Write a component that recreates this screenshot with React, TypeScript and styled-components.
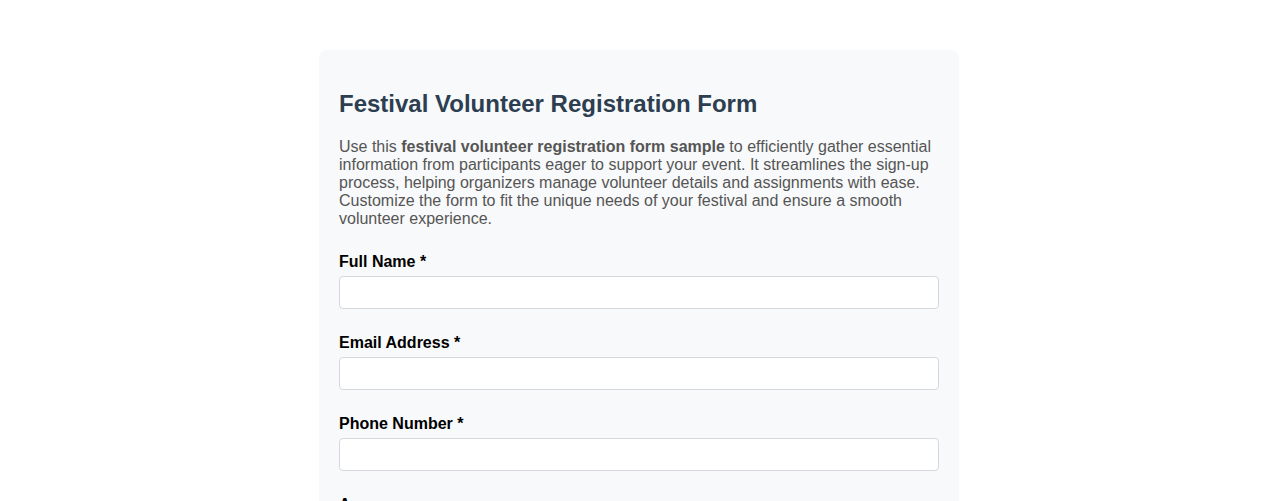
import React from "react";
import styled, { createGlobalStyle } from "styled-components";

const Global = createGlobalStyle`
  html, body { margin: 0; padding: 0; background: #ffffff; }
  body { font-family: "Liberation Sans", Arial, sans-serif; }
  * { box-sizing: border-box; }
`;

const Card = styled.div`
  max-width: 640px;
  margin: 50px auto;
  padding: 20px;
  background: #f8f9fa;
  border-radius: 8px;
`;

const Title = styled.h2`
  margin: 20px 0;
  font-size: 24px;
  line-height: 28px;
  font-weight: bold;
  color: #2c3e50;
`;

const Intro = styled.p`
  margin: 0 0 25px;
  font-size: 16px;
  line-height: 18px;
  color: #555555;
`;

const Form = styled.form`
  display: flex;
  flex-direction: column;
  gap: 25px;
`;

const Group = styled.div`
  display: flex;
  flex-direction: column;
  gap: 5px;
`;

const Label = styled.label`
  font-size: 16px;
  line-height: 18px;
  font-weight: bold;
  color: #000000;
`;

const Input = styled.input`
  width: 100%;
  height: 33px;
  padding: 0 8px;
  font-family: inherit;
  font-size: 16px;
  background: #ffffff;
  border: 1px solid #d6d8db;
  border-radius: 4px;
`;

const fields = [
  { id: "name", label: "Full Name *", type: "text" },
  { id: "email", label: "Email Address *", type: "email" },
  { id: "phone", label: "Phone Number *", type: "tel" },
  { id: "age", label: "Age", type: "number" },
];

export default function App() {
  return (
    <>
      <Global />
      <Card>
        <Title>Festival Volunteer Registration Form</Title>
        <Intro>
          Use this <strong>festival volunteer registration form sample</strong> to efficiently
          gather essential information from participants eager to support your event. It
          streamlines the sign-up process, helping organizers manage volunteer details and
          assignments with ease. Customize the form to fit the unique needs of your festival and
          ensure a smooth volunteer experience.
        </Intro>
        <Form>
          {fields.map((f) => (
            <Group key={f.id}>
              <Label htmlFor={f.id}>{f.label}</Label>
              <Input id={f.id} type={f.type} />
            </Group>
          ))}
        </Form>
      </Card>
    </>
  );
}
